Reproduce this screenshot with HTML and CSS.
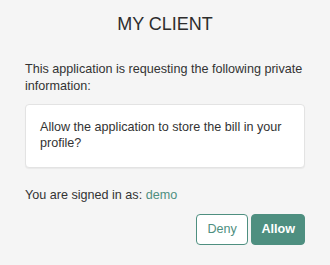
FILE: index.html
```html
<!DOCTYPE html>
<html>
<head>
<meta charset="utf-8">
<link rel="stylesheet" href="styles.css">
</head>
<body>
<main class="consent">
  <h1 class="title">MY CLIENT</h1>
  <p class="intro">This application is requesting the following private information:</p>
  <div class="scope-box">Allow the application to store the bill in your profile?</div>
  <p class="signed">You are signed in as: <a class="user" href="#">demo</a></p>
  <div class="actions">
    <button class="btn btn-deny" type="button">Deny</button>
    <button class="btn btn-allow" type="button">Allow</button>
  </div>
</main>
</body>
</html>
```
FILE: styles.css
```css
html, body {
  margin: 0;
  padding: 0;
  background: #f5f5f5;
}
body {
  font-family: "Liberation Sans", Arial, sans-serif;
  font-size: 12.6px;
  line-height: 16.75px;
  color: #333;
}
.consent {
  padding: 0 25px;
}
.title {
  margin: 14px 0 0;
  font-size: 18px;
  line-height: 20px;
  font-weight: normal;
  text-align: center;
  color: #2d2d2d;
}
.intro {
  margin: 27px 0 0;
}
.scope-box {
  margin-top: 9px;
  padding: 14px 14px 15px;
  background: #fff;
  border: 1px solid #e3e3e3;
  border-radius: 4px;
  box-shadow: 0 1px 1px rgba(0,0,0,0.05);
}
.signed {
  margin: 19px 0 0;
}
.user {
  color: #4e8f80;
  text-decoration: none;
}
.actions {
  margin-top: 10px;
  display: flex;
  justify-content: flex-end;
  gap: 3px;
}
.btn {
  height: 31px;
  font-family: inherit;
  font-size: 12.6px;
  border-radius: 4px;
  border: 1px solid #4e8f80;
  cursor: pointer;
}
.btn-deny {
  background: #fff;
  color: #4e8f80;
  padding: 0 10.5px;
}
.btn-allow {
  background: #4e8f80;
  color: #fff;
  font-weight: bold;
  padding: 0 9px;
}
```
